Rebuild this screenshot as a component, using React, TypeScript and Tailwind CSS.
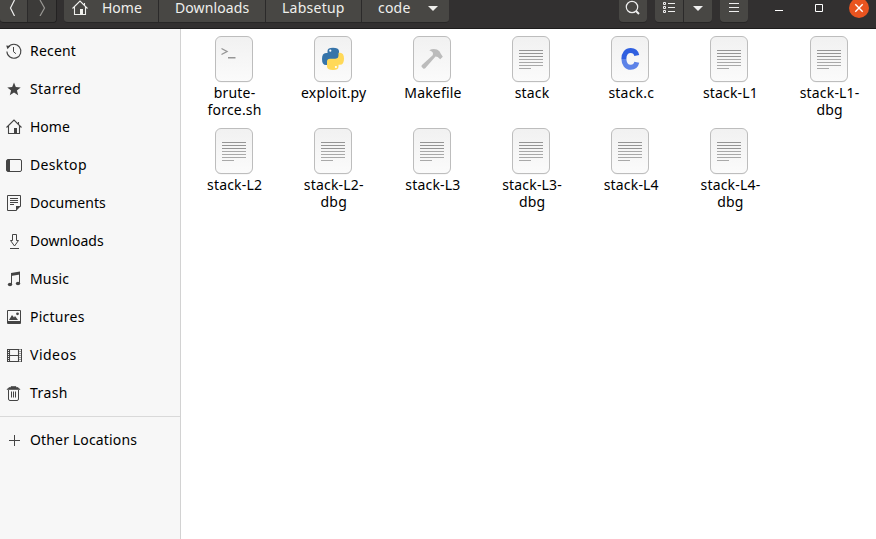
import React from "react";

type IconName =
  | "recent" | "star" | "home" | "desktop" | "documents" | "downloads"
  | "music" | "pictures" | "videos" | "trash" | "plus";

function Icon({ name }: { name: IconName }) {
  const shapes: Record<IconName, React.ReactNode> = {
    recent: (
      <>
        <path d="M2.2 4.2A7 7 0 1 1 .9 8.5" fill="none" stroke="currentColor" strokeWidth="1.1" />
        <path d="M.2 2.4 4.3 3 1.5 6.2z" />
        <path d="M7.5 4v4.7l2.4 2" fill="none" stroke="currentColor" />
      </>
    ),
    star: <path d="m8 1.5 1.800 4.600 4.900.3-3.800 3.100 1.300 4.800L8 11.600 3.800 14.300 5.100 9.500 1.300 6.400l4.900-.3z" />,
    home: (
      <>
        <path d="M.5 8.500 8 1l7.500 7.500M2.500 7v7.500h11V7M12.500 5V3" fill="none" stroke="currentColor" strokeWidth="1.100" />
        <path d="M8 9h3v6H8z" />
      </>
    ),
    desktop: (
      <>
        <rect x=".5" y="2.500" width="15" height="12" rx="1.500" fill="none" stroke="currentColor" />
        <path d="M1 3h3v11H1z" />
      </>
    ),
    documents: (
      <>
        <path d="M10.500 15.500h-9V.500h13v11" fill="none" stroke="currentColor" />
        <path d="M4 3.500h8M4 5.500h8M4 7.500h8M4 9.500h4" stroke="currentColor" />
        <path d="M10 16v-5h5z" />
      </>
    ),
    downloads: (
      <path d="M6.500 1.500h4v6h2L8.500 13l-4-5.500h2zM4 15.500h9" fill="none" stroke="currentColor" />
    ),
    music: (
      <>
        <path d="M5 2 14 .500v3L5 5z" />
        <path d="M5.500 3v10M13.500 2v10" stroke="currentColor" />
        <ellipse cx="4" cy="13.500" rx="2.200" ry="1.800" />
        <ellipse cx="12" cy="12.500" rx="2.200" ry="1.800" />
      </>
    ),
    pictures: (
      <>
        <path d="M1.500 1.500h13v13h-13z" fill="none" stroke="currentColor" />
        <path d="M2 12h12v2.500H2zM3 11l3-5 2 2.500L9 7l3 4z" />
        <circle cx="11.500" cy="4.800" r="1.400" />
      </>
    ),
    videos: (
      <>
        <path d="M3.500 2.500h9v12h-9zM3.500 8.500h9" fill="none" stroke="currentColor" strokeWidth="1.100" />
        <path d="M1.500 2v13M15.500 2v13" stroke="currentColor" />
        <path d="M2.500 2v13M14 2v13" stroke="currentColor" strokeDasharray="1 1" />
      </>
    ),
    trash: (
      <>
        <path d="M1 4.500 3 2.500h9L14 4.500zM5 1.500h5v1H5z" stroke="currentColor" strokeWidth=".6" />
        <path d="M2.500 5v9q0 1.500 1.500 1.500h7q1.500 0 1.500-1.500V5M5.500 6.500v6M7.500 6.500v6M9.500 6.500v6" fill="none" stroke="currentColor" />
      </>
    ),
    plus: <path d="M3 8.500h11M8.500 3v11" stroke="currentColor" />,
  };
  return (
    <svg className="size-4 shrink-0 overflow-visible" viewBox="0 0 16 16" fill="currentColor">
      {shapes[name]}
    </svg>
  );
}

const places: { label: string; icon: IconName; tracking: string }[] = [
  { label: "Recent", icon: "recent", tracking: "tracking-[0.2px]" },
  { label: "Starred", icon: "star", tracking: "tracking-[0.43px]" },
  { label: "Home", icon: "home", tracking: "" },
  { label: "Desktop", icon: "desktop", tracking: "tracking-[0.35px]" },
  { label: "Documents", icon: "documents", tracking: "tracking-[0.03px]" },
  { label: "Downloads", icon: "downloads", tracking: "tracking-[0.04px]" },
  { label: "Music", icon: "music", tracking: "tracking-[0.15px]" },
  { label: "Pictures", icon: "pictures", tracking: "tracking-[0.25px]" },
  { label: "Videos", icon: "videos", tracking: "tracking-[0.5px]" },
  { label: "Trash", icon: "trash", tracking: "tracking-[0.4px]" },
];

function Place({ label, icon, tracking }: { label: string; icon: IconName; tracking: string }) {
  return (
    <div className="flex h-[38px] items-center gap-2 pl-1.5 text-[#444]">
      <Icon name={icon} />
      <span className={`pb-0.5 text-black ${tracking}`}>{label}</span>
    </div>
  );
}

type Kind = "shell" | "python" | "make" | "c" | "text";

const snake = "M13.500 17v-2q0-3.300 5.500-3.300t6 3.300v5q0 3-3 3h-5q-3.500 0-3.500 3.500V29H12q-4 0-4-6t4-6z";

function FileIcon({ kind }: { kind: Kind }) {
  return (
    <svg className="h-[47px] w-[38px]" viewBox="0 0 38 47">
      <defs>
        <linearGradient id="page" x1="0" y1="0" x2="0" y2="1">
          <stop offset="0" stopColor="#f1f1f1" />
          <stop offset="1" stopColor="#fbfbfb" />
        </linearGradient>
        <linearGradient id="blue" x1="0" y1="0" x2="0" y2="1">
          <stop offset=".5" stopColor="#2f5fe0" />
          <stop offset=".5" stopColor="#5d83e8" />
        </linearGradient>
      </defs>
      <rect x=".5" y="1" width="37" height="45.300" rx="5.500" fill="#dedede" />
      <rect x=".5" y=".5" width="37" height="45" rx="5.500" fill="url(#page)" stroke="#bdbdbd" />
      {kind === "shell" && (
        <path d="m6.500 12.500 5.500 3-5.500 3M13 21.800h7.500" fill="none" stroke="#969696" strokeWidth="1.400" />
      )}
      {kind === "python" && (
        <>
          <path d={snake} fill="#3674a9" />
          <path d={snake} fill="#ffd958" transform="rotate(180 19 22.850)" />
          <circle cx="16.300" cy="14.700" r="1.100" fill="white" />
          <circle cx="21.900" cy="31" r="1.100" fill="white" />
        </>
      )}
      {kind === "make" && (
        <path d="M16.300 14.200q3.700-2.200 7.700-.7 3 1.300 3.800 4.200l2 3-2.600 2.500-2.500-2.300-2.200-.4L12 32.500l-1.500.3-2-2.100.2-1.400L19.700 19.300q1.500-3.500-3.400-5.100z" fill="#bcbcbc" />
      )}
      {kind === "c" && (
        <path d="M25.800 19.500c-.8-3.500-3-5-6-5-4.300 0-6.900 3.500-6.900 8.300s2.600 8.500 6.900 8.500c3 0 5.200-1.500 6-5" fill="none" stroke="url(#blue)" strokeWidth="5" />
      )}
      {kind === "text" && (
        <>
          <path d="M7 14.500h24M7 17.500h24M7 20.500h24" stroke="#959595" />
          <path d="M7 23.500h24M7 26.500h24M7 29.500h24M7 32.500h12" stroke="#a9a9a9" />
        </>
      )}
    </svg>
  );
}

const files: { lines: string[]; kind: Kind }[] = [
  { lines: ["brute-", "force.sh"], kind: "shell" },
  { lines: ["exploit.py"], kind: "python" },
  { lines: ["Makefile"], kind: "make" },
  { lines: ["stack"], kind: "text" },
  { lines: ["stack.c"], kind: "c" },
  { lines: ["stack-L1"], kind: "text" },
  { lines: ["stack-L1-", "dbg"], kind: "text" },
  { lines: ["stack-L2"], kind: "text" },
  { lines: ["stack-L2-", "dbg"], kind: "text" },
  { lines: ["stack-L3"], kind: "text" },
  { lines: ["stack-L3-", "dbg"], kind: "text" },
  { lines: ["stack-L4"], kind: "text" },
  { lines: ["stack-L4-", "dbg"], kind: "text" },
];

const button = "flex h-[22px] bg-[#484744]";

function Header() {
  return (
    <header className="flex h-[29px] shrink-0 items-start border-b border-[#1d1c1c] bg-[#323030] text-[#efefec]">
      <div className="flex h-[23px] w-[57px] overflow-hidden rounded-b border-b border-r border-[#232222]">
        <div className={`${button} w-[27px] border-r border-[#2b2a2a] box-content`}>
          <svg width="27" height="16" fill="none" stroke="#efefef" strokeWidth="1.200"><path d="m14.500 0-4 8 4 8" /></svg>
        </div>
        <div className="flex h-[22px] w-[29px] bg-[#3c3b39]">
          <svg width="28" height="16" fill="none" stroke="#999894" strokeWidth="1.200"><path d="m12 0 4.500 8-4.500 8" /></svg>
        </div>
      </div>
      <nav className="ml-[7px] flex h-[23px] overflow-hidden rounded-b border-b border-[#282727] leading-4">
        <div className={`${button} w-[95px] border-r border-[#2b2a2a] pl-2`}>
          <Icon name="home" /><span className="ml-[14px]">Home</span>
        </div>
        <div className={`${button} w-[107px] border-r border-[#2b2a2a] pl-4 tracking-[0.1px]`}>Downloads</div>
        <div className={`${button} w-[96px] border-r border-[#2b2a2a] pl-4 tracking-[0.25px]`}>Labsetup</div>
        <div className={`${button} w-[87px] pl-4`}>
          <span className="w-[50px] tracking-[0.2px]">code</span>
          <svg width="10" height="16" fill="currentColor"><path d="M0 6h10l-5 5z" /></svg>
        </div>
      </nav>
      <div className="ml-auto flex h-[23px]">
        <div className={`${button} w-[28px] rounded-b shadow-[0_1px_#272626]`}>
          <svg width="28" height="18" fill="none" stroke="#efefef" strokeWidth="1.200"><circle cx="13" cy="7" r="5.700" /><path d="m17 11 3 3" strokeWidth="2" /></svg>
        </div>
        <div className="ml-2 flex h-[22px] overflow-hidden rounded-b shadow-[0_1px_#272626]">
          <div className={`${button} w-[29px] border-r border-[#2b2a2a]`}>
            <svg width="28" height="16" fill="none" stroke="#efefef"><path d="M8.500 2.500h2v2h-2zM8.500 6.500h2v2h-2zM8.500 10.500h2v2h-2zM13 3.500h7M13 7.500h7M13 11.500h7" /></svg>
          </div>
          <div className={`${button} w-[28px]`}>
            <svg width="28" height="16" fill="#efefef"><path d="M9 6h10l-5 5z" /></svg>
          </div>
        </div>
        <div className={`${button} ml-2 w-[28px] rounded-b shadow-[0_1px_#272626]`}>
          <svg width="28" height="16" fill="none" stroke="#efefef"><path d="M9 3.500h10M9 7.500h10M9 11.500h10" /></svg>
        </div>
      </div>
      <svg className="shrink-0" width="128" height="20" fill="none" stroke="white">
        <path d="M27 10.500h8" />
        <path d="M67.500 4.500h7v7h-7z" />
        <circle cx="111" cy="8" r="10" fill="#e95420" stroke="none" />
        <path d="m107.300 4.300 7.400 7.400m0-7.400-7.400 7.400" strokeWidth="1.400" />
      </svg>
    </header>
  );
}

export default function App() {
  return (
    <div className="flex h-[539px] w-[876px] flex-col overflow-hidden bg-white font-['Noto_Sans',sans-serif] text-[14px] text-black">
      <Header />
      <div className="flex min-h-0 flex-1">
        <aside className="w-[181px] shrink-0 border-r border-[#d2d2d2] bg-[#f7f7f7] pt-[3px]">
          {places.map((p) => <Place key={p.label} {...p} />)}
          <hr className="my-1 border-[#d9d9d9]" />
          <Place label="Other Locations" icon="plus" tracking="tracking-[0.15px]" />
        </aside>
        <main className="grid w-[697.2px] shrink-0 grid-cols-7 content-start pl-[3px] pt-[7px] tracking-[0.18px]">
          {files.map((f) => (
            <div key={f.lines.join("")} className="flex h-[92px] flex-col items-center">
              <FileIcon kind={f.kind} />
              <div className="mt-[1px] whitespace-nowrap pl-0.5 text-center leading-[17px]">
                {f.lines.map((l) => <div key={l}>{l}</div>)}
              </div>
            </div>
          ))}
        </main>
      </div>
    </div>
  );
}
